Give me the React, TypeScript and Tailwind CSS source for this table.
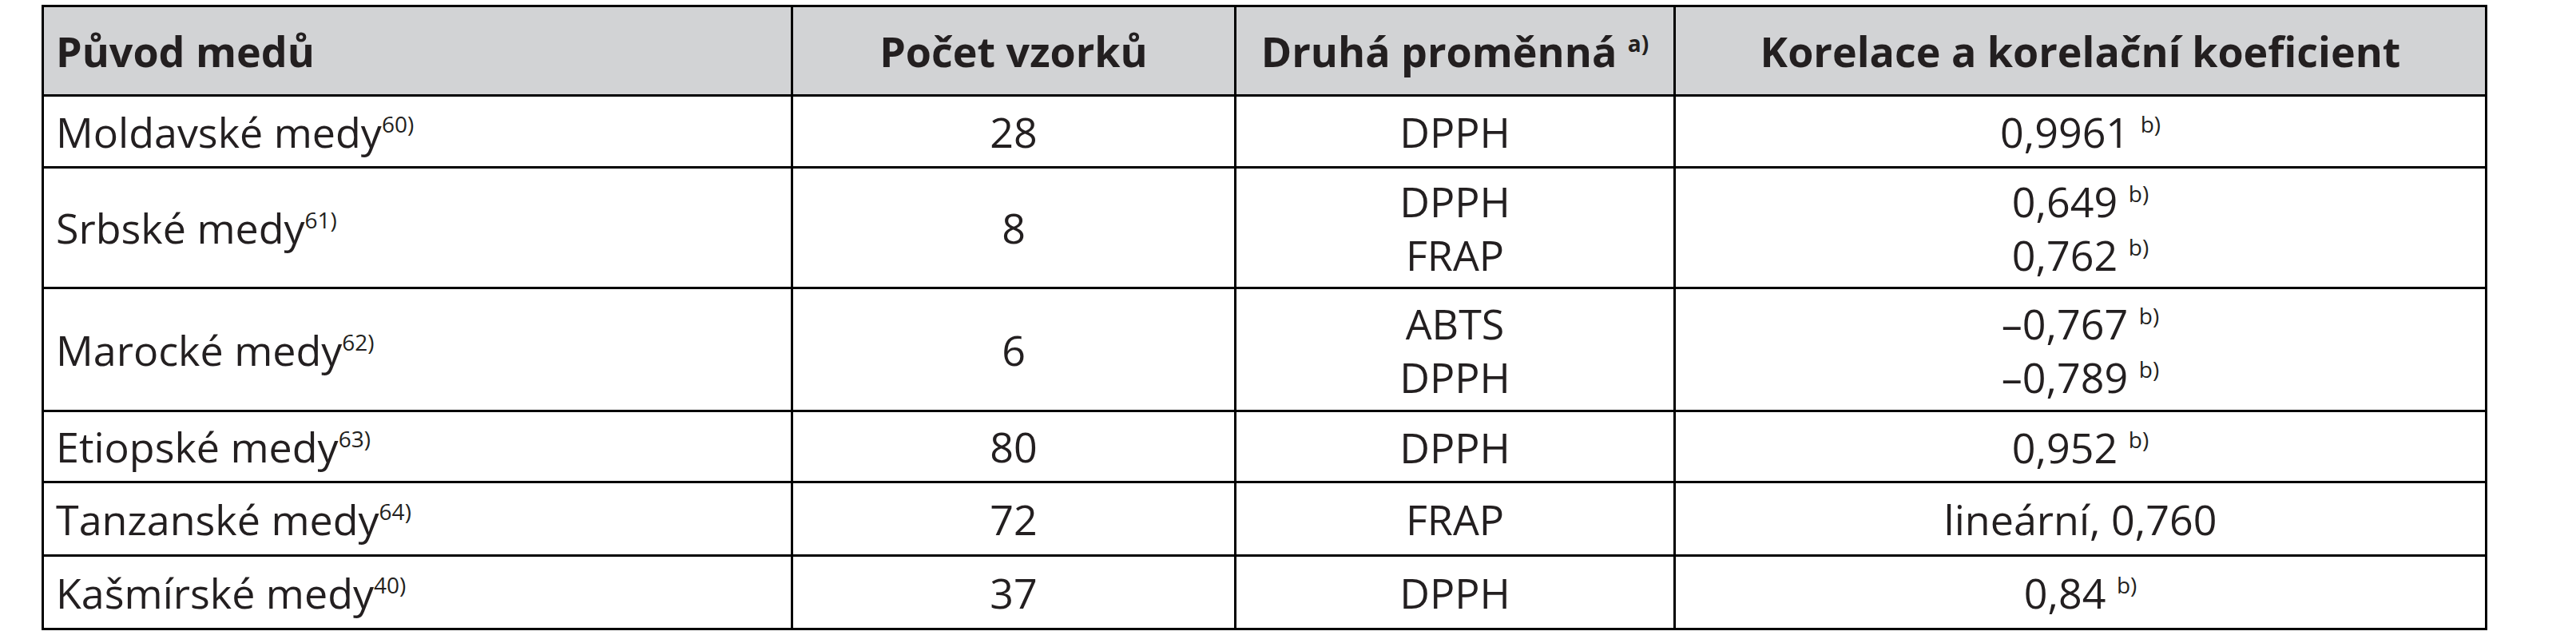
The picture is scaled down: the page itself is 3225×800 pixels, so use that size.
type Row = {
  origin: string;
  note: string;
  count: string;
  vars: string[];
  values: { v: string; sup?: string }[];
  height: string;
};

const rows: Row[] = [
  { origin: 'Moldavské medy', note: '60)', count: '28', vars: ['DPPH'], values: [{ v: '0,9961', sup: 'b)' }], height: 'h-[90px]' },
  {
    origin: 'Srbské medy',
    note: '61)',
    count: '8',
    vars: ['DPPH', 'FRAP'],
    values: [
      { v: '0,649', sup: 'b)' },
      { v: '0,762', sup: 'b)' },
    ],
    height: 'h-[151px]',
  },
  {
    origin: 'Marocké medy',
    note: '62)',
    count: '6',
    vars: ['ABTS', 'DPPH'],
    values: [
      { v: '–0,767', sup: 'b)' },
      { v: '–0,789', sup: 'b)' },
    ],
    height: 'h-[154px]',
  },
  { origin: 'Etiopské medy', note: '63)', count: '80', vars: ['DPPH'], values: [{ v: '0,952', sup: 'b)' }], height: 'h-[89px]' },
  { origin: 'Tanzanské medy', note: '64)', count: '72', vars: ['FRAP'], values: [{ v: 'lineární, 0,760' }], height: 'h-[92px]' },
  { origin: 'Kašmírské medy', note: '40)', count: '37', vars: ['DPPH'], values: [{ v: '0,84', sup: 'b)' }], height: 'h-[92px]' },
];

function Sup({ children }: { children: string }) {
  return <sup className="relative top-[-19px] text-[28px] leading-none align-baseline">{children}</sup>;
}

function Lines({ items }: { items: { v: string; sup?: string }[] }) {
  return (
    <div className="flex flex-col items-center leading-[67px]">
      {items.map((it) => (
        <div key={it.v}>
          {it.v}
          {it.sup && (
            <>
              {' '}
              <Sup>{it.sup}</Sup>
            </>
          )}
        </div>
      ))}
    </div>
  );
}

export default function App() {
  const cell = 'border-[3px] border-black p-0';

  return (
    <div className="min-h-[800px] w-[3225px] bg-white pt-[6px] pl-[52px] font-['Open_Sans',sans-serif] text-[52px] text-[#231f20]">
      <table className="w-[3059px] table-fixed border-collapse">
        <colgroup>
          <col className="w-[938px]" />
          <col className="w-[555px]" />
          <col className="w-[550px]" />
          <col className="w-[1016px]" />
        </colgroup>
        <thead>
          <tr className="h-[112px] bg-[#d2d3d5] font-bold">
            <th className={`${cell} pl-[15px] text-left`}>Původ medů</th>
            <th className={`${cell} text-center`}>Počet vzorků</th>
            <th className={`${cell} text-center`}>
              Druhá proměnná <Sup>a)</Sup>
            </th>
            <th className={`${cell} text-center`}>Korelace a korelační koeficient</th>
          </tr>
        </thead>
        <tbody>
          {rows.map((r) => (
            <tr key={r.origin} className={r.height}>
              <td className={`${cell} pl-[15px] text-left`}>
                {r.origin}
                <Sup>{r.note}</Sup>
              </td>
              <td className={`${cell} text-center`}>{r.count}</td>
              <td className={`${cell} text-center`}>
                <Lines items={r.vars.map((v) => ({ v }))} />
              </td>
              <td className={`${cell} text-center`}>
                <Lines items={r.values} />
              </td>
            </tr>
          ))}
        </tbody>
      </table>
    </div>
  );
}
